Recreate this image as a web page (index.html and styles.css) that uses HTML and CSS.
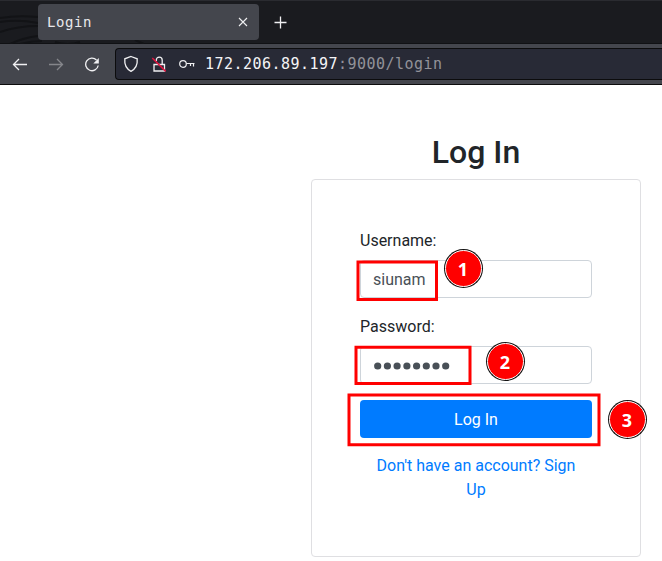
FILE: index.html
```html
<!DOCTYPE html>
<html lang="en">
<head>
<meta charset="utf-8">
<title>Login</title>
<link rel="stylesheet" href="styles.css">
</head>
<body>
<header class="browser">
  <div class="tabs">
    <svg class="texture" width="260" height="43" viewBox="0 0 260 43"><path d="M0 17Q18 14 38 16M0 21Q18 18 38 22M0 31Q18 25 38 25M10 43Q22 37 38 35M20 43Q31 40 42 40M55 41Q68 45 80 41M135 39L144 43"/></svg>
    <div class="tab">
      <span>Login</span>
      <svg width="10" height="10" viewBox="0 0 10 10"><path d="M1 1l8 8M9 1L1 9"/></svg>
    </div>
    <svg class="plus" width="14" height="14" viewBox="0 0 14 14"><path d="M6.5 .5v12M.5 6.5h12"/></svg>
  </div>
  <div class="toolbar">
    <svg class="nav back" width="16" height="16" viewBox="0 0 16 16"><path d="M15 8.5H1.5M7 3L1.5 8.5L7 14"/></svg>
    <svg class="nav forward" width="16" height="16" viewBox="0 0 16 16"><path d="M1 8.5h13.5M9 3L14.5 8.5L9 14"/></svg>
    <svg class="nav" width="16" height="16" viewBox="0 0 16 16"><path d="M12.5 4A6.3 6.3 0 1 0 14.2 9.5"/><path class="solid" d="M14.8 2v5.5H9.3z"/></svg>
    <div class="address">
      <svg class="shield" width="16" height="18" viewBox="0 0 16 18"><path d="M8 1.5L14.2 3.8C14.7 9.5 12.5 14 8 16.3C3.5 14 1.3 9.5 1.8 3.8Z"/></svg>
      <svg class="lock" width="16" height="18" viewBox="0 0 16 18"><path d="M3 9.5h10.5v6.5H3zM5.3 6V5a2.9 2.9 0 0 1 5.9 0v4.5"/><path class="slash" d="M1.3 3L14.7 16.4"/></svg>
      <svg class="key" width="18" height="18" viewBox="0 0 18 18"><circle cx="5" cy="9" r="3.3"/><path d="M8.3 8.5H16.5M12.5 8.5V11M15.5 8.5v3"/></svg>
      <span class="url"><b>172.206.89.197</b>:9000/login</span>
    </div>
  </div>
</header>
<main class="page">
  <h2>Log In</h2>
  <form class="card">
    <label for="user">Username:</label>
    <input id="user" type="text" value="siunam">
    <label for="pass">Password:</label>
    <div class="field">
      <svg width="80" height="10" viewBox="0 0 80 10"><circle cx="4.7" cy="5" r="3.6"/><circle cx="14.4" cy="5" r="3.6"/><circle cx="24.1" cy="5" r="3.6"/><circle cx="33.9" cy="5" r="3.6"/><circle cx="43.6" cy="5" r="3.6"/><circle cx="53.3" cy="5" r="3.6"/><circle cx="63" cy="5" r="3.6"/><circle cx="72.7" cy="5" r="3.6"/></svg>
    </div>
    <button type="button">Log In</button>
    <a>Don't have an account? Sign Up</a>
  </form>
</main>
<svg class="marks" width="662" height="561" viewBox="0 0 662 561">
  <path d="M358 262H436.500V299.500H358ZM356 347.300H470V383.500H356ZM349 395H599V444.800H349Z"/>
</svg>
<div class="badge badge-one">1</div>
<div class="badge badge-two">2</div>
<div class="badge badge-three">3</div>
</body>
</html>
```
FILE: styles.css
```css
* { box-sizing: border-box; }
body {
  margin: 0;
  height: 561px;
  overflow: hidden;
  position: relative;
  background: #fff;
  color: #212529;
  font: 16px/24px Roboto, sans-serif;
}
svg { flex: none; fill: none; stroke: #f0f0f2; stroke-width: 1.3; }
.browser { height: 85px; border-bottom: 1px solid #0c0c0d; font-family: "DejaVu Sans Mono", monospace; }
.tabs {
  position: relative;
  height: 44px;
  background: #1a1b1f;
  border-top: 1px solid #2a2b30;
  border-bottom: 1px solid #101114;
  display: flex;
  align-items: flex-start;
  padding: 3px 0 0 38px;
}
.texture { position: absolute; left: 0; top: 0; stroke: #121316; stroke-width: 2; }
.tab {
  position: relative;
  width: 221px;
  height: 36px;
  border-radius: 4px;
  background: #44464d;
  color: #e8e8eb;
  display: flex;
  align-items: center;
  justify-content: space-between;
  padding: 0 11px 0 9px;
  font-size: 14px;
  letter-spacing: .57px;
}
.tab svg { stroke-width: 1.1; }
.plus { margin: 12px 0 0 15px; }
.toolbar { height: 40px; background: #44464d; display: flex; align-items: center; padding-left: 12px; }
.nav { margin-right: 20px; stroke-width: 1.3; }
.nav:nth-of-type(3) { margin-right: 15px; }
.forward { stroke: #85868b; }
.solid { fill: #f0f0f2; stroke: none; }
.address {
  flex: 1;
  height: 32px;
  border: 1px solid #0c0c0d;
  border-right: 0;
  border-radius: 4px 0 0 4px;
  background: #282a36;
  display: flex;
  align-items: center;
  padding-left: 7px;
}
.shield { margin-right: 12px; }
.lock { margin-right: 11px; }
.lock .slash { stroke: #e2143f; stroke-width: 1.5; }
.key { margin-right: 9px; stroke-width: 1.2; }
.url { color: #929299; font-size: 15px; letter-spacing: .47px; white-space: nowrap; }
.url b { color: #f4f4f6; font-weight: 400; }
.page { width: 330px; margin: 48px 0 0 311px; }
h2 { margin: 0 0 8px; font-size: 32px; line-height: 38px; font-weight: 500; text-align: center; }
.card { height: 378px; padding: 48px; border: 1px solid #dfdfe2; border-radius: 4px; }
label { display: block; height: 24px; padding-top: 1px; margin-bottom: 8px; }
input, .field {
  display: flex;
  align-items: center;
  width: 100%;
  height: 38px;
  margin: 0 0 16px;
  padding: 6px 12px;
  border: 1px solid #ced4da;
  border-radius: 4px;
  background: #fff;
  color: #495057;
  font: inherit;
}
.field svg { fill: #495057; stroke: none; margin: 2px 0 0 -.5px; }
button {
  display: block;
  width: 100%;
  height: 38px;
  border: 0;
  border-radius: 4px;
  padding: 2px 0 0;
  background: #007bff;
  color: #fff;
  font: inherit;
}
.card a { display: block; margin-top: 16px; padding: 0 12px; color: #007bff; text-align: center; }
.marks { position: absolute; left: 0; top: 0; stroke: #f00; stroke-width: 3; pointer-events: none; }
.badge {
  position: absolute;
  width: 37px;
  height: 37px;
  border: 1px solid #fff;
  border-radius: 50%;
  box-shadow: 0 0 0 1px #111;
  background: #f00;
  color: #fff;
  font: 700 18px/36px "Noto Sans", sans-serif;
  text-align: center;
}
.badge-one { left: 444.500px; top: 249.500px; }
.badge-two { left: 486.500px; top: 342.500px; }
.badge-three { left: 608.500px; top: 400.500px; }
```
